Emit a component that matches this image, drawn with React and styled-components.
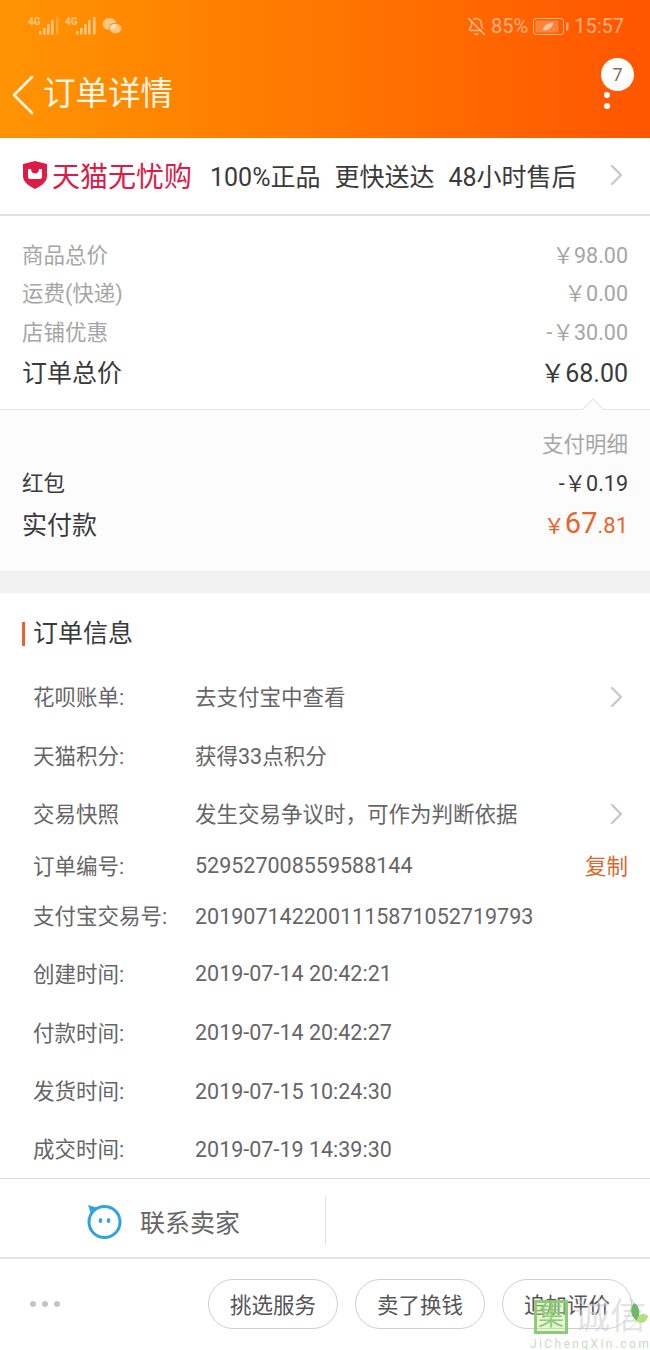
import React from "react";
import styled, { createGlobalStyle } from "styled-components";
import { BellOff } from "lucide-react";

const FONT = `Roboto, "Noto Sans CJK SC", sans-serif`;

const GlobalStyle = createGlobalStyle`
  html, body { margin: 0; padding: 0; background: #fff; }
  * { box-sizing: border-box; }
`;

const Page = styled.div`
  position: relative;
  width: 650px;
  height: 1350px;
  overflow: hidden;
  background: #fff;
  font-family: ${FONT};
  display: flex;
  flex-direction: column;
`;

const Top = styled.div`
  height: 138px;
  flex: none;
  background: linear-gradient(90deg, #ff9402 0%, #ff7a00 45%, #ff5500 100%);
  display: flex;
  flex-direction: column;
`;

const StatusBar = styled.div`
  height: 50px;
  padding: 15px 26px 0 28px;
  display: flex;
  align-items: flex-start;
  justify-content: space-between;
  color: rgba(255, 255, 255, 0.5);
`;

const StatusGroup = styled.div`
  display: flex;
  align-items: center;
  gap: ${(p) => p.$gap || 4}px;
  height: 22px;
  font-size: 20px;
`;

const NavBar = styled.div`
  flex: 1;
  display: flex;
  align-items: flex-start;
  justify-content: space-between;
  padding: 8px 16px 0 12px;
  color: #fff6e6;
`;

const NavTitle = styled.div`
  display: flex;
  align-items: center;
  gap: 9px;
  font-size: 32.5px;
  line-height: 40px;
  margin-top: 17px;
`;

const TitleText = styled.span`
  margin-top: -2px;
`;

const More = styled.div`
  position: relative;
  width: 33px;
  height: 51px;
  display: flex;
  flex-direction: column;
  align-items: center;
  justify-content: flex-end;
  gap: 5px;
  padding-right: 21px;
`;

const Dot = styled.i`
  display: block;
  width: 6px;
  height: 6px;
  border-radius: 50%;
  background: #fff;
`;

const Badge = styled.div`
  position: absolute;
  top: 0;
  right: 0;
  width: 33px;
  height: 33px;
  border-radius: 50%;
  background: #fff;
  color: #8a6a58;
  font-size: 18px;
  display: flex;
  align-items: center;
  justify-content: center;
`;

const Promo = styled.div`
  height: 78px;
  flex: none;
  display: flex;
  align-items: center;
  padding: 0 27px 2px 22px;
  border-bottom: 2px solid #e2e2e2;
`;

const Brand = styled.div`
  display: flex;
  align-items: center;
  gap: 4px;
  color: #dc1c46;
  font-size: 28px;
  margin-right: 18px;
`;

const PromoItems = styled.div`
  flex: 1;
  display: flex;
  gap: 14px;
  color: #3a3a3a;
  font-size: 25px;
  white-space: nowrap;
`;

const Totals = styled.div`
  height: 194px;
  flex: none;
  padding-top: 18px;
  border-bottom: 1px solid #e4e4e4;
  position: relative;
`;

const Caret = styled.i`
  position: absolute;
  right: 46px;
  bottom: -1px;
  width: 24px;
  height: 13px;
  overflow: hidden;
  &::after {
    content: "";
    position: absolute;
    left: 4px;
    top: 5px;
    width: 16px;
    height: 16px;
    background: #fcfcfc;
    border: 1px solid #e4e4e4;
    transform: rotate(45deg);
  }
`;

const Paid = styled.div`
  height: 161px;
  flex: none;
  padding-top: 12px;
  background: #fcfcfc;
`;

const Line = styled.div`
  height: ${(p) => p.$h}px;
  padding: 0 22px;
  display: flex;
  align-items: center;
  justify-content: space-between;
  font-size: ${(p) => (p.$big ? 25 : 21.5)}px;
  color: ${(p) => (p.$dark ? "#3a3a3a" : "#a6a6a6")};
`;

const Orange = styled.div`
  color: #e8642c;
  display: flex;
  align-items: baseline;
`;

const OrangeSmall = styled.span`
  font-size: ${(p) => p.$size}px;
`;

const Gap = styled.div`
  height: 22px;
  flex: none;
  background: #f2f2f2;
`;

const Section = styled.div`
  flex: 1;
  min-height: 0;
  padding-top: 29px;
`;

const SectionTitle = styled.div`
  margin: 0 0 21px 22px;
  padding-left: 8px;
  height: 24px;
  line-height: 24px;
  border-left: 3px solid #e8642c;
  font-size: 25px;
  color: #3a3a3a;
`;

const InfoRow = styled.div`
  height: ${(p) => p.$h}px;
  display: flex;
  align-items: center;
  padding: 0 22px 0 33px;
  font-size: 21.5px;
  color: #666;
  white-space: nowrap;
`;

const InfoLabel = styled.div`
  width: 162px;
  flex: none;
  margin-bottom: 3px;
`;

const InfoValue = styled.div`
  flex: 1;
  margin-bottom: ${(p) => (p.$cjk ? 3 : 0)}px;
`;

const RowArrow = styled.div`
  display: flex;
  margin-right: 5px;
`;

const Copy = styled.div`
  color: #d9682f;
  margin-bottom: 3px;
`;

const Contact = styled.div`
  height: 81px;
  flex: none;
  padding-top: 6px;
  border-top: 1px solid #dcdcdc;
  border-bottom: 2px solid #e4e4e4;
  display: flex;
  align-items: center;
`;

const ContactCell = styled.div`
  width: 326px;
  height: 50px;
  display: flex;
  align-items: center;
  gap: 18px;
  padding-left: 86px;
  border-right: 1px solid #e2e2e2;
  font-size: 25px;
  color: #666;
`;

const Actions = styled.div`
  height: 91px;
  flex: none;
  display: flex;
  align-items: flex-start;
  padding: 20px 18px 0 30px;
`;

const Dots = styled.div`
  display: flex;
  gap: 6px;
  margin: 22px auto 0 0;
`;

const GrayDot = styled.i`
  display: block;
  width: 6px;
  height: 6px;
  border-radius: 50%;
  background: #c4c4c4;
`;

const Pill = styled.div`
  width: 130px;
  height: 50px;
  margin-left: 17px;
  padding-bottom: 2px;
  border: 1px solid #cfcfcf;
  border-radius: 25px;
  display: flex;
  align-items: center;
  justify-content: center;
  font-size: 21.5px;
  color: #555;
`;

const Watermark = styled.div`
  position: absolute;
  left: 530px;
  top: 1300px;
  width: 120px;
  pointer-events: none;
`;

const MarkTop = styled.div`
  display: flex;
  align-items: center;
  gap: 6px;
  padding-left: 4px;
`;

const MarkBox = styled.div`
  width: 34px;
  height: 34px;
  border: 3px solid #8ecb78;
  background: rgba(190, 235, 150, 0.4);
  color: #8ecb78;
  font-size: 26px;
  line-height: 27px;
  text-align: center;
`;

const MarkName = styled.div`
  color: rgba(205, 205, 205, 0.55);
  font-size: 36px;
  line-height: 34px;
  white-space: nowrap;
`;

const MarkSite = styled.div`
  color: #c4e0bc;
  font-size: 12px;
  letter-spacing: 2.4px;
  line-height: 14px;
  margin-top: 3px;
  white-space: nowrap;
`;

const MarkLeaf = styled.svg`
  position: absolute;
  left: 98px;
  top: 3px;
`;

const Signal = ({ faded }) => (
  <svg width="32" height="20" viewBox="0 0 32 20">
    <text x="0" y="9" fontSize="10" fontWeight="700" fontFamily="Roboto" fill="currentColor">4G</text>
    <g fill="currentColor">
      <rect x="11" y="15" width="2.6" height="3.500" />
      <rect x="15" y="12" width="2.6" height="6.500" />
      <rect x="19" y="8" width="2.6" height="10.500" />
      <rect x="23" y="4" width="2.6" height="14.500" />
      <rect x="28" y="1" width="2.6" height="17.500" opacity={faded ? 0.4 : 1} />
    </g>
  </svg>
);

const Wechat = () => (
  <svg width="20" height="18" viewBox="0 0 20 18" fill="currentColor">
    <ellipse cx="7.500" cy="7" rx="7" ry="6" />
    <ellipse cx="13.500" cy="11.500" rx="6.300" ry="5.200" stroke="#ff8c00" strokeWidth="1" />
  </svg>
);

const Battery = () => (
  <svg width="36" height="17" viewBox="0 0 36 17">
    <rect x=".5" y=".5" width="30" height="16" rx="2.5" fill="none" stroke="currentColor" />
    <rect x="2.500" y="2.500" width="23" height="12" rx="1" fill="currentColor" opacity=".45" />
    <path d="M10 12.500 C10 7.500 15 5 20 4.500 C20 9 16 12.500 10 12.500Z" fill="#fff" opacity=".55" />
    <rect x="33" y="4.500" width="2.500" height="8" rx="1" fill="currentColor" />
  </svg>
);

const BackIcon = () => (
  <svg width="22" height="40" viewBox="0 0 22 40" fill="none" stroke="#fff6e6" strokeWidth="2.600" strokeLinecap="round" strokeLinejoin="round">
    <path d="M20 2 L2 20 L20 38" />
  </svg>
);

const Chevron = ({ color = "#c8c8c8" }) => (
  <svg width="13" height="22" viewBox="0 0 13 22" fill="none" stroke={color} strokeWidth="2.400" strokeLinecap="round" strokeLinejoin="round">
    <path d="M2 2 L11 11 L2 20" />
  </svg>
);

const Shield = () => (
  <svg width="26" height="28" viewBox="0 0 26 28">
    <path d="M13 0 L25 3 V15 C25 21 19 25 13 28 C7 25 1 21 1 15 V3 Z" fill="#dc1c46" />
    <path d="M6 9 Q6 8 7 8 H9 C9 11 11 12.500 13 12.500 C15 12.500 17 11 17 8 H19 Q20 8 20 9 V16 Q20 18 18 18 H8 Q6 18 6 16 Z" fill="#fff" />
  </svg>
);

const Face = () => (
  <svg width="36" height="36" viewBox="0 0 36 36" fill="none">
    <circle cx="18.500" cy="19" r="15.500" stroke="#2ca5dc" strokeWidth="3" />
    <path d="M2 2 L12 5 L5 11 Z" fill="#2ca5dc" />
    <ellipse cx="14.500" cy="17.500" rx="1.800" ry="2.600" fill="#2ca5dc" />
    <ellipse cx="22.500" cy="17.500" rx="1.800" ry="2.600" fill="#2ca5dc" />
  </svg>
);

const INFO = [
  { label: "花呗账单:", value: "去支付宝中查看", h: 60, arrow: true, cjk: true },
  { label: "天猫积分:", value: "获得33点积分", h: 58, cjk: true },
  { label: "交易快照", value: "发生交易争议时，可作为判断依据", h: 58, arrow: true, cjk: true },
  { label: "订单编号:", value: "529527008559588144", h: 45, copy: true },
  { label: "支付宝交易号:", value: "2019071422001115871052719793", h: 56 },
  { label: "创建时间:", value: "2019-07-14 20:42:21", h: 59 },
  { label: "付款时间:", value: "2019-07-14 20:42:27", h: 59 },
  { label: "发货时间:", value: "2019-07-15 10:24:30", h: 58 },
  { label: "成交时间:", value: "2019-07-19 14:39:30", h: 58 },
];

const App = () => {
  return (
    <Page>
      <GlobalStyle />
      <Top>
        <StatusBar>
          <StatusGroup $gap={5}>
            <Signal faded />
            <Signal />
            <Wechat />
          </StatusGroup>
          <StatusGroup $gap={5}>
            <BellOff size={19} />
            <span>85%</span>
            <Battery />
            <span>15:57</span>
          </StatusGroup>
        </StatusBar>
        <NavBar>
          <NavTitle>
            <BackIcon />
            <TitleText>订单详情</TitleText>
          </NavTitle>
          <More>
            <Badge>7</Badge>
            <Dot />
            <Dot />
          </More>
        </NavBar>
      </Top>

      <Promo>
        <Brand>
          <Shield />
          天猫无忧购
        </Brand>
        <PromoItems>
          <span>100%正品</span>
          <span>更快送达</span>
          <span>48小时售后</span>
        </PromoItems>
        <Chevron />
      </Promo>

      <Totals>
        <Line $h={38}>
          <span>商品总价</span>
          <span>￥98.00</span>
        </Line>
        <Line $h={38}>
          <span>运费(快递)</span>
          <span>￥0.00</span>
        </Line>
        <Line $h={40}>
          <span>店铺优惠</span>
          <span>-￥30.00</span>
        </Line>
        <Line $h={41} $big $dark>
          <span>订单总价</span>
          <span>￥68.00</span>
        </Line>
        <Caret />
      </Totals>

      <Paid>
        <Line $h={40}>
          <span />
          <span>支付明细</span>
        </Line>
        <Line $h={38} $dark>
          <span>红包</span>
          <span>-￥0.19</span>
        </Line>
        <Line $h={46} $big $dark>
          <span>实付款</span>
          <Orange>
            <OrangeSmall $size={21}>￥</OrangeSmall>
            <OrangeSmall $size={29}>67</OrangeSmall>
            <OrangeSmall $size={22}>.81</OrangeSmall>
          </Orange>
        </Line>
      </Paid>

      <Gap />

      <Section>
        <SectionTitle>订单信息</SectionTitle>
        {INFO.map((row) => (
          <InfoRow key={row.label} $h={row.h}>
            <InfoLabel>{row.label}</InfoLabel>
            <InfoValue $cjk={row.cjk}>{row.value}</InfoValue>
            {row.arrow && (
              <RowArrow>
                <Chevron />
              </RowArrow>
            )}
            {row.copy && <Copy>复制</Copy>}
          </InfoRow>
        ))}
      </Section>

      <Contact>
        <ContactCell>
          <Face />
          联系卖家
        </ContactCell>
      </Contact>

      <Actions>
        <Dots>
          <GrayDot />
          <GrayDot />
          <GrayDot />
        </Dots>
        <Pill>挑选服务</Pill>
        <Pill>卖了换钱</Pill>
        <Pill>追加评价</Pill>
      </Actions>

      <Watermark>
        <MarkTop>
          <MarkBox>集</MarkBox>
          <MarkName>诚信</MarkName>
        </MarkTop>
        <MarkSite>JiChengXin.com</MarkSite>
        <MarkLeaf width="20" height="28" viewBox="0 0 20 28">
          <path d="M6 0 C12 3 13 11 9 18 C3 14 1 6 6 0Z" fill="#6fb56a" />
          <path d="M9 18 C9 11 17 9 20 13 C19 19 14 22 9 18Z" fill="#b2e07c" />
          <path d="M9 18 C6 22 3 25 0 27" stroke="#cfe8c2" strokeWidth="1" fill="none" />
        </MarkLeaf>
      </Watermark>
    </Page>
  );
};

export default App;
